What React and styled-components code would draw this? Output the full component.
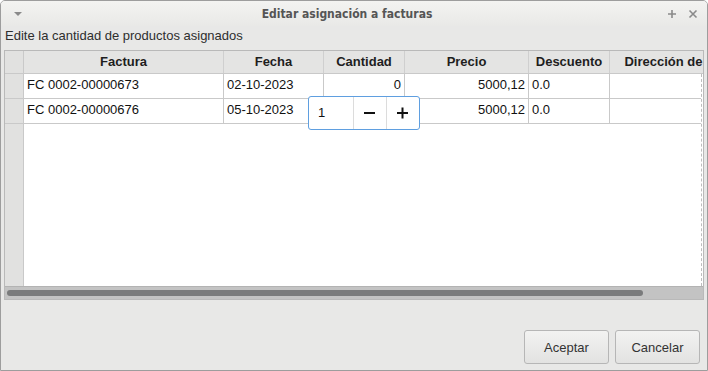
import React from 'react'
import styled, {createGlobalStyle} from 'styled-components'

const GlobalStyle = createGlobalStyle`
  html, body {
    margin: 0;
    padding: 0;
    background: #fff;
  }
  * { box-sizing: border-box; }
`

const Window = styled.div`
  width: 708px;
  height: 371px;
  border: 1px solid #9d9d9d;
  border-radius: 5px 5px 0 0;
  background: #e8e8e7;
  display: flex;
  flex-direction: column;
  font-family: "Liberation Sans", Arial, sans-serif;
  overflow: hidden;
`

const TitleBar = styled.div`
  height: 25px;
  display: flex;
  align-items: center;
  padding: 0 6px 0 9px;
  background: linear-gradient(#f3f3f1, #e9e9e7);
  color: #5a5a5a;
`

const Title = styled.div`
  flex: 1;
  text-align: center;
  font-family: "DejaVu Sans Condensed", "Noto Sans", sans-serif;
  font-stretch: condensed;
  font-weight: bold;
  font-size: 12px;
  color: #555;
  padding-left: 4px;
`

const TitleBtn = styled.span`
  width: 16px;
  display: flex;
  justify-content: center;
  color: #8a8a8a;
  margin-left: ${p => p.gap || 0}px;
`

const Body = styled.div`
  flex: 1;
  display: flex;
  flex-direction: column;
  padding: 0 3px;
`

const Hint = styled.div`
  height: 24px;
  line-height: 20px;
  font-size: 13px;
  color: #2e2e2e;
  padding-left: 1px;
`

const TableFrame = styled.div`
  height: 250px;
  border: 1px solid #b9b9b9;
  display: flex;
  flex-direction: column;
  background: #fff;
`

const Viewport = styled.div`
  flex: 1;
  display: flex;
  overflow: hidden;
`

const RowHeaders = styled.div`
  width: 19px;
  flex-shrink: 0;
  background: #e1e1e0;
  border-right: 1px solid #c9c9c9;
  display: flex;
  flex-direction: column;
`

const RowHead = styled.div`
  height: ${p => p.h}px;
  border-bottom: 1px solid #c9c9c9;
`

const Grid = styled.div`
  flex: 1;
  display: flex;
  flex-direction: column;
  overflow: hidden;
`

const cols = '200px 100px 81px 124px 81px 108px'

const HeaderRow = styled.div`
  display: grid;
  grid-template-columns: ${cols};
  height: 23px;
  background: #e4e4e3;
  border-bottom: 1px solid #c9c9c9;
`

const HeadCell = styled.div`
  border-right: 1px solid #cfcfcf;
  font-size: 13px;
  font-weight: bold;
  color: #1e1e1e;
  text-align: center;
  line-height: 21px;
  white-space: nowrap;
  overflow: hidden;
`

const Rows = styled.div`
  flex: 1;
  width: 678px;
  border-right: 1px dashed #bdbdbd;
`

const Row = styled.div`
  display: grid;
  grid-template-columns: ${cols};
  height: 25px;
  border-bottom: 1px solid #c9c9c9;
`

const Cell = styled.div`
  position: relative;
  border-right: 1px solid #c9c9c9;
  font-size: 13px;
  color: #111;
  line-height: 22px;
  padding: 0 3px;
  text-align: ${p => (p.right ? 'right' : 'left')};
  white-space: nowrap;
`

const Spinner = styled.div`
  position: absolute;
  left: -16px;
  top: -3px;
  width: 112px;
  height: 34px;
  display: flex;
  background: #fff;
  border: 1px solid #5f9fe0;
  border-radius: 3px;
  z-index: 2;
`

const SpinValue = styled.div`
  flex: 1;
  padding-left: 9px;
  line-height: 32px;
  font-size: 13px;
  text-align: left;
`

const SpinButton = styled.div`
  width: 33px;
  border-left: 1px solid #dcdcdc;
  display: flex;
  align-items: center;
  justify-content: center;
  color: #111;
`

const ScrollTrack = styled.div`
  height: 13px;
  background: #c3c3c3;
  border-top: 1px solid #b3b3b3;
  padding: 3px 0 0 2px;
`

const ScrollThumb = styled.div`
  width: 636px;
  height: 6px;
  border-radius: 3px;
  background: #7a7b7c;
`

const Footer = styled.div`
  flex: 1;
  display: flex;
  justify-content: flex-end;
  align-items: flex-end;
  gap: 6px;
  padding: 0 4px 6px 0;
`

const Button = styled.button`
  width: 85px;
  height: 34px;
  border: 1px solid #b6b6b6;
  border-radius: 3px;
  background: linear-gradient(#f2f2f1, #e2e2e1);
  font-family: "Liberation Sans", Arial, sans-serif;
  font-size: 13px;
  color: #333;
  padding: 0;
`

const data = [
  {factura: 'FC 0002-00000673', fecha: '02-10-2023', cantidad: '0', precio: '5000,12', desc: '0.0'},
  {factura: 'FC 0002-00000676', fecha: '05-10-2023', cantidad: '', precio: '5000,12', desc: '0.0', editing: true},
]

const Minus = () => (
  <svg width="12" height="12" viewBox="0 0 12 12">
    <rect x="0" y="5" width="11" height="2" fill="#111" />
  </svg>
)

const Plus = () => (
  <svg width="12" height="12" viewBox="0 0 12 12">
    <rect x="0" y="5" width="11" height="2" fill="#111" />
    <rect x="4.5" y="0.5" width="2" height="11" fill="#111" />
  </svg>
)

const App = () => {
  return (
    <>
      <GlobalStyle />
      <Window>
        <TitleBar>
          <TitleBtn>
            <svg width="10" height="6" viewBox="0 0 10 6"><path d="M1 1h8L5 5z" fill="#8a8a8a" /></svg>
          </TitleBtn>
          <Title>Editar asignación a facturas</Title>
          <TitleBtn>
            <svg width="10" height="10" viewBox="0 0 10 10"><path d="M5 1v8M1 5h8" stroke="#8a8a8a" strokeWidth="1.6" /></svg>
          </TitleBtn>
          <TitleBtn gap={5}>
            <svg width="10" height="10" viewBox="0 0 10 10"><path d="M1.5 1.5l7 7M8.5 1.5l-7 7" stroke="#8a8a8a" strokeWidth="1.6" /></svg>
          </TitleBtn>
        </TitleBar>
        <Body>
          <Hint>Edite la cantidad de productos asignados</Hint>
          <TableFrame>
            <Viewport>
              <RowHeaders>
                <RowHead h={23} />
                {data.map((r, i) => <RowHead key={i} h={25} />)}
              </RowHeaders>
              <Grid>
                <HeaderRow>
                  <HeadCell>Factura</HeadCell>
                  <HeadCell>Fecha</HeadCell>
                  <HeadCell>Cantidad</HeadCell>
                  <HeadCell>Precio</HeadCell>
                  <HeadCell>Descuento</HeadCell>
                  <HeadCell>Dirección de</HeadCell>
                </HeaderRow>
                <Rows>
                  {data.map((r, i) => (
                    <Row key={i}>
                      <Cell>{r.factura}</Cell>
                      <Cell>{r.fecha}</Cell>
                      <Cell right>
                        {r.cantidad}
                        {r.editing && (
                          <Spinner>
                            <SpinValue>1</SpinValue>
                            <SpinButton><Minus /></SpinButton>
                            <SpinButton><Plus /></SpinButton>
                          </Spinner>
                        )}
                      </Cell>
                      <Cell right>{r.precio}</Cell>
                      <Cell>{r.desc}</Cell>
                      <Cell />
                    </Row>
                  ))}
                </Rows>
              </Grid>
            </Viewport>
            <ScrollTrack>
              <ScrollThumb />
            </ScrollTrack>
          </TableFrame>
          <Footer>
            <Button>Aceptar</Button>
            <Button>Cancelar</Button>
          </Footer>
        </Body>
      </Window>
    </>
  )
}

export default App
